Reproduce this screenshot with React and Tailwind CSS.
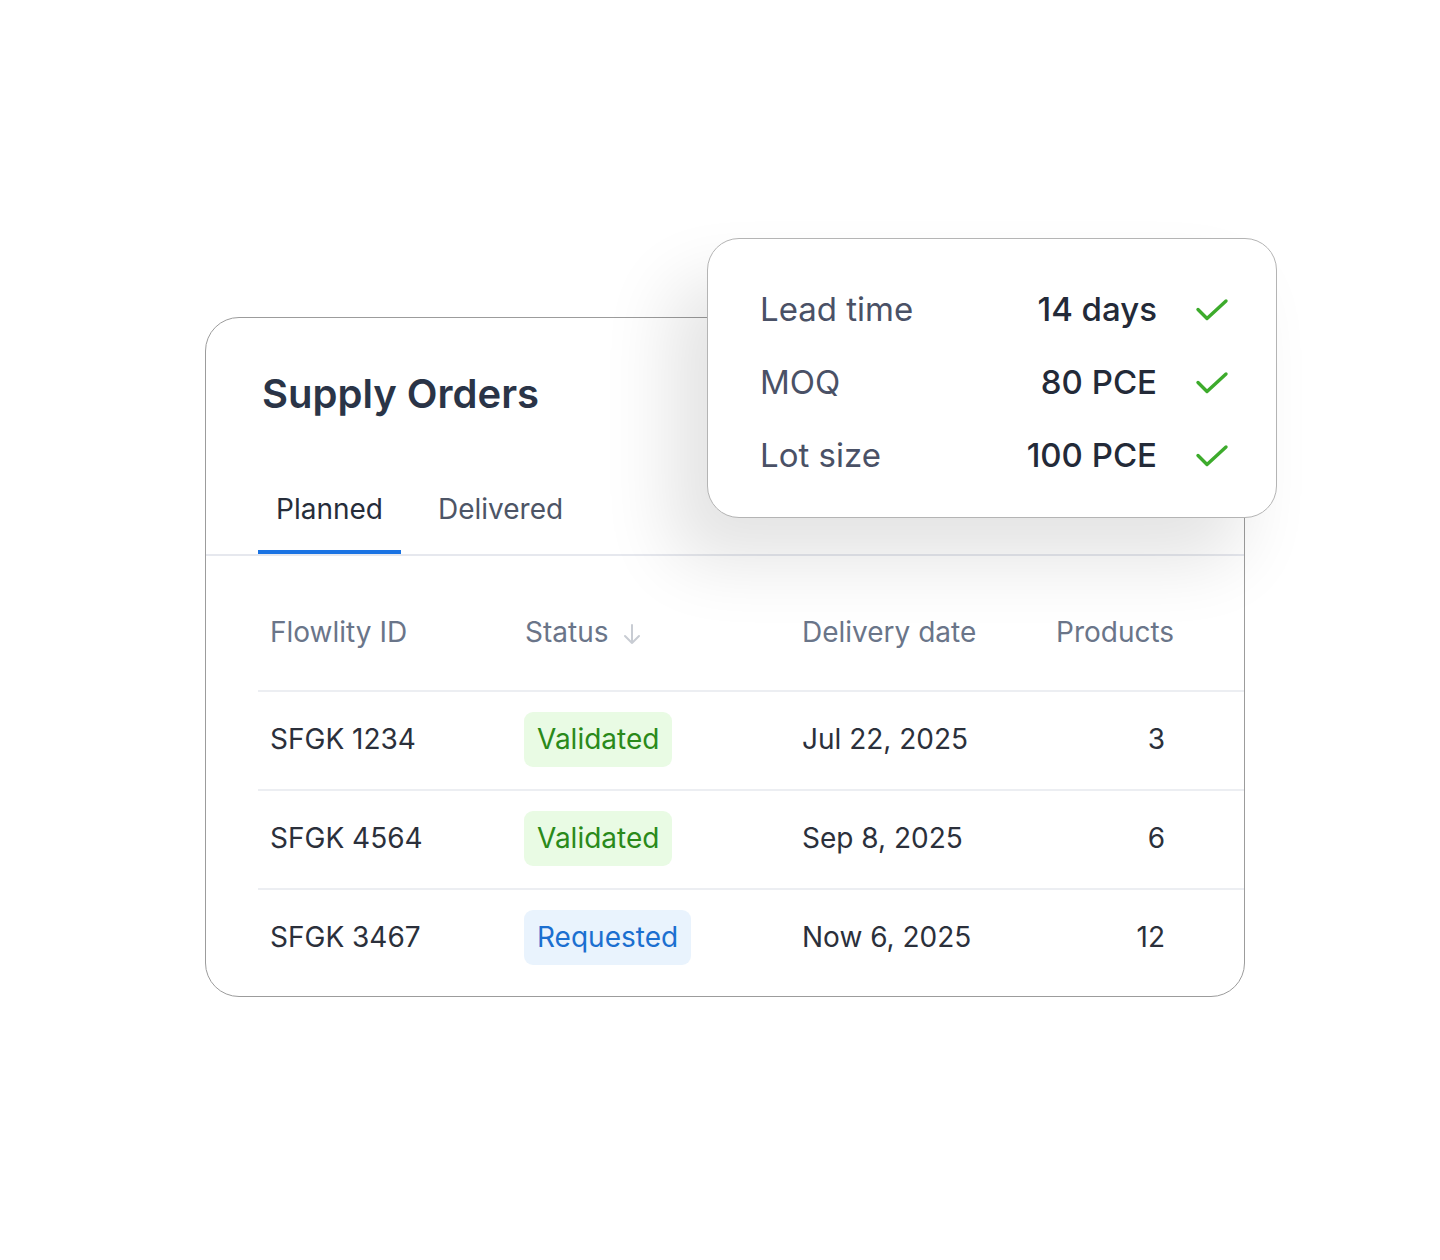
import React from "react";

const rows = [
    { id: "SFGK 1234", status: "Validated", date: "Jul 22, 2025", products: 3 },
    { id: "SFGK 4564", status: "Validated", date: "Sep 8, 2025", products: 6 },
    { id: "SFGK 3467", status: "Requested", date: "Now 6, 2025", products: 12 },
];

const checks = [
    { label: "Lead time", value: "14 days" },
    { label: "MOQ", value: "80 PCE" },
    { label: "Lot size", value: "100 PCE" },
];

const Check = () => (
    <svg width="34" height="26" viewBox="0 0 34 26" fill="none">
        <path d="M3 12.5 L12 21.5 L31 4" stroke="#3dab2c" strokeWidth="3.4" strokeLinecap="round" strokeLinejoin="round" />
    </svg>
);

const Badge = ({ status }) => {
    const styles =
        status === "Validated"
            ? "bg-[#e9fbe4] text-[#2a8a1a]"
            : "bg-[#e9f3fd] text-[#1b6fd0]";
    return (
        <span className={`inline-flex h-[55px] items-center rounded-[9px] px-[13px] ${styles}`}>
            {status}
        </span>
    );
};

const App = () => {
    return (
        <div className="min-h-[1260px] w-full bg-white pt-[317px] pl-[205px] font-['Inter','Noto_Sans',sans-serif] text-[28px] leading-[34px]">
            <div className="relative w-[1040px]">
                {/* main card */}
                <div className="h-[680px] rounded-[34px] border border-[#9c9c9c] bg-white">
                    <h1 className="pt-[52px] pl-[56px] text-[40px] font-semibold leading-[48px] text-[#2a3447]">
                        Supply Orders
                    </h1>

                    <div className="mt-[74px] flex border-b-2 border-[#e6e8ee] pl-[52px]">
                        <div className="border-b-4 border-[#1a73e3] px-[18px] pb-[24px] text-[#262d3a]">
                            Planned
                        </div>
                        <div className="ml-[19px] px-[18px] pb-[24px] text-[#4d5566]">Delivered</div>
                    </div>

                    <div className="ml-[52px]">
                        <div className="grid grid-cols-[255px_277px_254px_1fr] pt-[59px] pb-[41px] text-[#6a7589]">
                            <div className="pl-3">Flowlity ID</div>
                            <div className="flex items-center gap-[14px] pl-3">
                                Status
                                <svg width="20" height="24" viewBox="0 0 20 24" fill="none" className="mt-1">
                                    <path d="M10 3 V21 M3 14 L10 21 L17 14" stroke="#c8ccd3" strokeWidth="2" strokeLinecap="round" strokeLinejoin="round" />
                                </svg>
                            </div>
                            <div className="pl-3">Delivery date</div>
                            <div className="pl-3">Products</div>
                        </div>

                        {rows.map((r) => (
                            <div
                                key={r.id}
                                className="grid h-[99px] grid-cols-[255px_277px_254px_121px] items-center border-t-2 border-[#eceef2] pb-[3px] text-[#2b303b]"
                            >
                                <div className="pl-3">{r.id}</div>
                                <div className="pl-[11px]">
                                    <Badge status={r.status} />
                                </div>
                                <div className="pl-3">{r.date}</div>
                                <div className="text-right">{r.products}</div>
                            </div>
                        ))}
                    </div>
                </div>

                {/* floating check popup */}
                <div className="absolute top-[-79px] left-[502px] h-[280px] w-[570px] rounded-[32px] border border-[#b4b4b4] bg-white pl-[52px] pr-[47px] pt-[51px] shadow-[-36px_44px_70px_rgba(0,0,0,0.11)]">
                    {checks.map((c) => (
                        <div key={c.label} className="mb-[34px] flex h-[39px] items-center text-[33px] leading-[39px]">
                            <span className="text-[#4a5166]">{c.label}</span>
                            <span className="ml-auto font-medium text-[#232a38]">{c.value}</span>
                            <span className="ml-[38px] flex">
                                <Check />
                            </span>
                        </div>
                    ))}
                </div>
            </div>
        </div>
    );
};

export default App;
